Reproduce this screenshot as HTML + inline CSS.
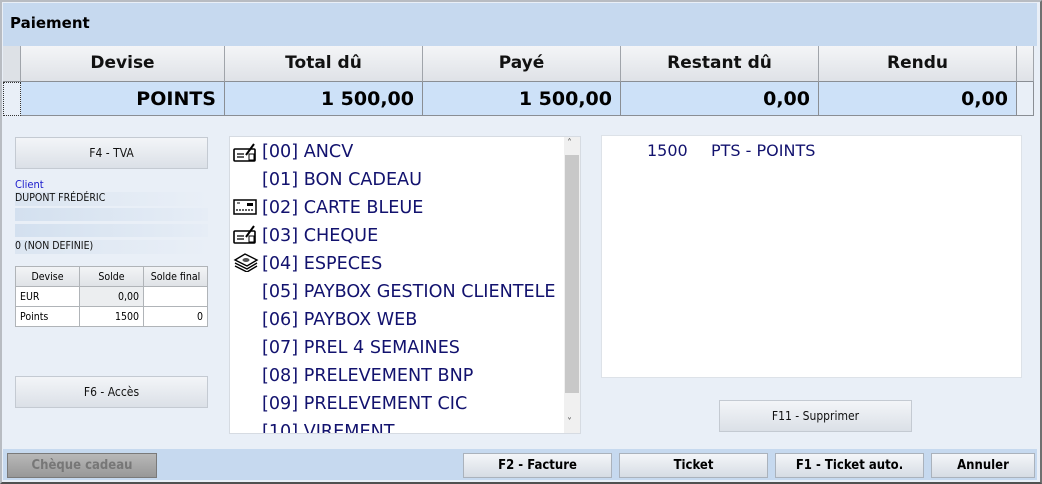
<!DOCTYPE html>
<html><head><meta charset="utf-8"><style>
*{margin:0;padding:0;box-sizing:border-box}
body{width:1042px;height:484px;overflow:hidden;background:#fff;font-family:"DejaVu Sans","Liberation Sans",sans-serif;position:relative}
.frame{position:absolute;left:0;top:0;width:1042px;height:484px;border:2px solid #b8bcc2;border-right-color:#707070;border-bottom-color:#505050;background:#e9eff7}
.abs{position:absolute}
.title{left:3px;top:3px;width:1034px;height:43px;background:#c6d9ef;font-weight:bold;font-size:15px;padding:11px 7px;color:#000}
.hdr{top:46px;height:36px;background:linear-gradient(#f4f5f7,#dfe2e7);border-right:1px solid #a0a4aa;border-bottom:1px solid #8a8e94;font-weight:bold;font-size:17px;text-align:center;line-height:34px;color:#111}
.row{top:82px;height:34px;background:#cde1f8;border-right:1px solid #8a8e94;border-bottom:1px solid #8a8e94;font-weight:bold;font-size:19px;text-align:right;line-height:34px;padding-right:8px;color:#000}
.btn{background:linear-gradient(#f3f5f8,#dbe0e7);border:1px solid #c4cad2;font-size:12px;text-align:center;color:#111;font-family:"DejaVu Sans Condensed","DejaVu Sans",sans-serif}
.bbtn{top:453px;height:25px;background:linear-gradient(#f4f6f9,#d6dce4);border:1px solid #aab2bc;font-weight:bold;font-size:13px;text-align:center;line-height:23px;font-family:"DejaVu Sans Condensed","DejaVu Sans",sans-serif}
.list{left:229px;top:136px;width:352px;height:298px;background:#fff;border:1px solid #d6dbe2;overflow:hidden}
.it{position:absolute;left:32px;font-size:17.6px;color:#12126e;white-space:nowrap;font-family:"DejaVu Sans",sans-serif}
.ic{position:absolute;left:3px}
.cl{font-size:10.5px;color:#111;font-family:"DejaVu Sans Condensed","DejaVu Sans",sans-serif}
table{border-collapse:collapse;font-size:10.5px;font-family:"DejaVu Sans Condensed","DejaVu Sans",sans-serif}
td{border:1px solid #b0b4b8;height:20px;padding:0 4px}
</style></head><body>
<div class="frame"></div>
<div class="abs title">Paiement</div>
<div class="abs hdr" style="left:3px;width:18px;background:#dde1e6"></div>
<div class="abs hdr" style="left:21px;width:204px">Devise</div>
<div class="abs hdr" style="left:225px;width:198px">Total dû</div>
<div class="abs hdr" style="left:423px;width:198px">Payé</div>
<div class="abs hdr" style="left:621px;width:198px">Restant dû</div>
<div class="abs hdr" style="left:819px;width:198px">Rendu</div>
<div class="abs hdr" style="left:1017px;width:17px"></div>
<div class="abs row" style="left:3px;width:18px;background:#e9eff7;border:1px dotted #333"></div>
<div class="abs row" style="left:21px;width:204px">POINTS</div>
<div class="abs row" style="left:225px;width:198px">1 500,00</div>
<div class="abs row" style="left:423px;width:198px">1 500,00</div>
<div class="abs row" style="left:621px;width:198px">0,00</div>
<div class="abs row" style="left:819px;width:198px">0,00</div>
<div class="abs" style="left:1017px;top:82px;width:17px;height:34px;background:#e9eff7;border-bottom:1px solid #8a8e94;border-right:1px solid #8a8e94"></div>

<div class="abs btn" style="left:15px;top:137px;width:193px;height:32px;line-height:30px">F4 - TVA</div>
<div class="abs cl" style="left:15px;top:178px;color:#1a1acc;font-size:11px">Client</div>
<div class="abs cl" style="left:15px;top:192px;width:193px;height:14px;background:linear-gradient(90deg,#dbe5f1,#e9eff7)">DUPONT FRÉDÉRIC</div>
<div class="abs" style="left:15px;top:208px;width:193px;height:13px;background:linear-gradient(90deg,#d3e0ef,#e6edf6)"></div>
<div class="abs" style="left:15px;top:224px;width:193px;height:13px;background:linear-gradient(90deg,#d3e0ef,#e6edf6)"></div>
<div class="abs cl" style="left:15px;top:240px;width:193px;height:14px;background:linear-gradient(90deg,#dbe5f1,#e9eff7)">0 (NON DEFINIE)</div>
<table class="abs" style="left:15px;top:266px;width:193px;background:#fff">
<tr style="background:linear-gradient(#f3f4f6,#dfe2e6)"><td style="text-align:center;width:64px">Devise</td><td style="text-align:center;width:64px">Solde</td><td style="text-align:center">Solde final</td></tr>
<tr><td>EUR</td><td style="text-align:right;background:#eceef0">0,00</td><td></td></tr>
<tr><td>Points</td><td style="text-align:right">1500</td><td style="text-align:right">0</td></tr>
</table>
<div class="abs btn" style="left:15px;top:376px;width:193px;height:32px;line-height:30px">F6 - Accès</div>

<div class="abs list">
<svg class="ic" style="top:5px" width="24" height="20" viewBox="0 0 24 20"><rect x="1" y="7" width="21" height="12" rx="1" fill="#fff" stroke="#000" stroke-width="1.6"/><path d="M4 12h7M4 15h7" stroke="#000" stroke-width="1.3"/><path d="M13 13L21 2" stroke="#000" stroke-width="2"/><rect x="16" y="12" width="5" height="6" fill="#fff" stroke="#000" stroke-width="1"/></svg>
<div class="it" style="top:5px">[00] ANCV</div>
<div class="it" style="top:33px">[01] BON CADEAU</div>
<svg class="ic" style="top:62px" width="24" height="16" viewBox="0 0 24 16"><rect x="1" y="1" width="22" height="14" fill="#fff" stroke="#000" stroke-width="1.5"/><rect x="14" y="4" width="6" height="3" fill="#000"/><path d="M3 11h18" stroke="#000" stroke-width="1.2" stroke-dasharray="2 1"/><path d="M4 4h3" stroke="#000"/></svg>
<div class="it" style="top:61px">[02] CARTE BLEUE</div>
<svg class="ic" style="top:87px" width="24" height="20" viewBox="0 0 24 20"><rect x="1" y="7" width="21" height="12" rx="1" fill="#fff" stroke="#000" stroke-width="1.6"/><path d="M4 12h7M4 15h7" stroke="#000" stroke-width="1.3"/><path d="M13 13L21 2" stroke="#000" stroke-width="2"/><rect x="16" y="12" width="5" height="6" fill="#fff" stroke="#000" stroke-width="1"/></svg>
<div class="it" style="top:89px">[03] CHEQUE</div>
<svg class="ic" style="top:115px" width="26" height="20" viewBox="0 0 26 20"><path d="M2 8l10-6 12 6-10 6z" fill="#fff" stroke="#000" stroke-width="1.4"/><ellipse cx="13" cy="8" rx="3.5" ry="2" fill="#555"/><path d="M2 11l12 6 10-6M2 14l12 6 10-6" fill="none" stroke="#000" stroke-width="1.4"/></svg>
<div class="it" style="top:117px">[04] ESPECES</div>
<div class="it" style="top:145px">[05] PAYBOX GESTION CLIENTELE</div>
<div class="it" style="top:173px">[06] PAYBOX WEB</div>
<div class="it" style="top:201px">[07] PREL 4 SEMAINES</div>
<div class="it" style="top:229px">[08] PRELEVEMENT BNP</div>
<div class="it" style="top:257px">[09] PRELEVEMENT CIC</div>
<div class="it" style="top:285px">[10] VIREMENT</div>
<div class="abs" style="left:334px;top:0;width:17px;height:298px;background:#f0f0f0"></div>
<div class="abs" style="left:335px;top:18px;width:14px;height:238px;background:#c8c8c8"></div>
<div class="abs" style="left:337px;top:1px;font-size:10px;color:#555">˄</div>
<div class="abs" style="left:337px;top:280px;font-size:10px;color:#555">˅</div>
</div>

<div class="abs" style="left:601px;top:135px;width:421px;height:243px;background:#fff;border:1px solid #dde2e8">
<div class="abs" style="left:45px;top:5px;font-size:16px;color:#12126e;font-family:'DejaVu Sans',sans-serif">1500</div>
<div class="abs" style="left:109px;top:5px;font-size:16px;color:#12126e;font-family:'DejaVu Sans',sans-serif;white-space:nowrap">PTS - POINTS</div>
</div>
<div class="abs btn" style="left:719px;top:400px;width:193px;height:32px;line-height:30px">F11 - Supprimer</div>

<div class="abs" style="left:3px;top:449px;width:1034px;height:31px;background:#c6d9ef"></div>
<div class="abs bbtn" style="left:7px;top:453px;width:150px;background:linear-gradient(#b8b8b8,#989898);border-color:#7a7a7a;color:#777">Chèque cadeau</div>
<div class="abs bbtn" style="left:463px;width:149px">F2 - Facture</div>
<div class="abs bbtn" style="left:619px;width:149px">Ticket</div>
<div class="abs bbtn" style="left:775px;width:149px">F1 - Ticket auto.</div>
<div class="abs bbtn" style="left:931px;width:104px">Annuler</div>
</body></html>
